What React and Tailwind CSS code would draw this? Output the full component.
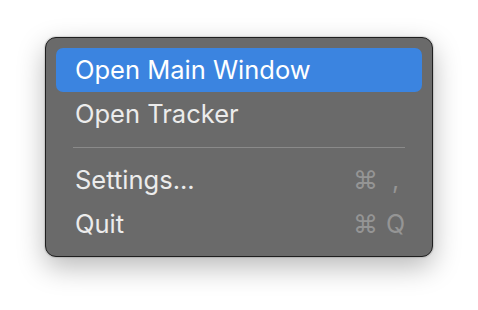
import React from 'react';

const items = [
    { label: 'Open Main Window', active: true },
    { label: 'Open Tracker' },
    { separator: true },
    { label: 'Settings...', key: ',' },
    { label: 'Quit', key: 'Q' },
];

const MenuItem = ({ label, active, shortcut }) => (
    <div
        className={`flex h-[44px] items-center justify-between rounded-[7px] pl-[19px] pr-[17px] ${
            active ? 'bg-[#3b84e0] text-white' : 'text-[#ececec]'
        }`}
    >
        <span className="text-[25.5px] leading-none">{label}</span>
        {shortcut && (
            <span className="flex items-center gap-[8px] text-[25px] leading-none text-[#959595]">
                <span>⌘</span>
                <span className="w-[19px] text-center">{shortcut}</span>
            </span>
        )}
    </div>
);

export default function App() {
    return (
        <div
            className="h-[310px] w-[478px] bg-white pl-[45px] pt-[37px]"
            style={{ fontFamily: 'Inter, "Noto Sans", sans-serif' }}
        >
            <div className="w-[388px] rounded-[11px] border border-[#1f1f1f] bg-[#6a6a6a] p-[10px] shadow-[0_0_1px_1px_rgba(0,0,0,0.12),0_10px_28px_rgba(0,0,0,0.28)]">
                {items.map((item, i) =>
                    item.separator ? (
                        <div key={i} className="flex h-[22px] items-center px-[17px]">
                            <div className="h-px w-full bg-[#8a8a8a]" />
                        </div>
                    ) : (
                        <MenuItem key={i} label={item.label} active={item.active} shortcut={item.key} />
                    )
                )}
            </div>
        </div>
    );
}
